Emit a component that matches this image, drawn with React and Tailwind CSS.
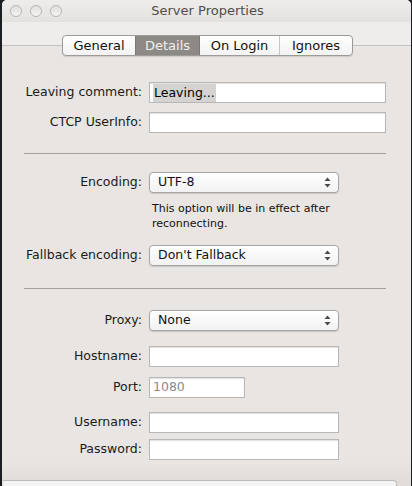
import React from "react";

const font = { fontFamily: '"DejaVu Sans", "Liberation Sans", sans-serif' };

function Arrows() {
  return (
    <svg width="7" height="11" viewBox="0 0 7 11" className="shrink-0">
      <path d="M3.5 0.5 L6.5 4 L0.5 4 Z" fill="#4a4a4a" />
      <path d="M3.5 10.5 L6.5 7 L0.5 7 Z" fill="#4a4a4a" />
    </svg>
  );
}

function Label({ children }) {
  return (
    <div className="w-[141px] shrink-0 text-right pr-[1px] text-[12.5px] text-[#1a1a1a] leading-none">
      {children}
    </div>
  );
}

function Field({ w, h = "h-[21px]", children }) {
  return (
    <div
      className={`${w} ${h} bg-white border border-[#b9b7b5] shadow-[inset_0_1px_1px_rgba(0,0,0,0.12)] flex items-center px-[3px] text-[12.5px]`}
    >
      {children}
    </div>
  );
}

function Popup({ value }) {
  return (
    <div className="w-[190px] h-[21px] rounded-[4px] border border-[#a8a6a4] bg-gradient-to-b from-white to-[#f2f2f2] shadow-[0_1px_1px_rgba(0,0,0,0.15)] flex items-center justify-between pl-[8px] pr-[7px] text-[12.5px] text-[#111]">
      <span>{value}</span>
      <Arrows />
    </div>
  );
}

function Row({ label, children, className = "" }) {
  return (
    <div className={`flex items-center gap-[6px] ${className}`}>
      <Label>{label}</Label>
      {children}
    </div>
  );
}

export default function App() {
  return (
    <div className="w-[412px] h-[486px] bg-[#1c1e22] overflow-hidden" style={font}>
      <div className="ml-[2px] w-[409px] h-[486px] bg-[#e8e5e2] rounded-t-[5px] flex flex-col relative">
        {/* Title bar */}
        <div className="h-[22px] rounded-t-[5px] bg-gradient-to-b from-[#efedeb] to-[#e4e2df] flex items-center relative">
          <div className="flex gap-[8px] pl-[8px]">
            {[0, 1, 2].map((i) => (
              <div
                key={i}
                className="w-[12px] h-[12px] rounded-full border border-[#b8b6b4] bg-gradient-to-b from-[#e2e0de] to-[#f4f3f2]"
              />
            ))}
          </div>
          <div className="absolute inset-0 flex items-center justify-center text-[13px] text-[#4f4d4b] pl-[2px]">
            Server Properties
          </div>
        </div>
        {/* toolbar band */}
        <div className="h-[24px] bg-[#efedeb] border-b border-[#c4c2bf]" />
        {/* segmented control */}
        <div className="-mt-[11px] flex justify-center pl-[2px] relative">
          <div className="flex h-[21px] rounded-[4px] border border-[#9d9b98] bg-gradient-to-b from-white to-[#f3f3f3] shadow-[0_1px_1px_rgba(0,0,0,0.12)] text-[13px] overflow-hidden">
            <div className="w-[72px] flex items-center justify-center text-[#111]">General</div>
            <div className="w-[65px] flex items-center justify-center bg-[#8d8a85] text-[#f1f0ee] border-x border-[#7d7a76]">
              Details
            </div>
            <div className="w-[80px] flex items-center justify-center text-[#111] border-r border-[#c9c7c5]">
              On Login
            </div>
            <div className="w-[72px] flex items-center justify-center text-[#111]">Ignores</div>
          </div>
        </div>

        {/* Form */}
        <Row label="Leaving comment:" className="mt-[26px]">
          <Field w="w-[237px]">
            <span className="bg-[#d5d3d1] px-[1px] leading-[18px]">Leaving...</span>
          </Field>
        </Row>
        <Row label="CTCP UserInfo:" className="mt-[9px]">
          <Field w="w-[237px]" />
        </Row>

        <div className="ml-[22px] w-[362px] h-px bg-[#a3a09d] mt-[20px]" />

        <Row label="Encoding:" className="mt-[18px]">
          <Popup value="UTF-8" />
        </Row>
        <div className="ml-[150px] mt-[8px] text-[11px] leading-[15px] text-[#111]">
          This option will be in effect after
          <br />
          reconnecting.
        </div>
        <Row label="Fallback encoding:" className="mt-[14px]">
          <Popup value="Don't Fallback" />
        </Row>

        <div className="ml-[22px] w-[362px] h-px bg-[#a3a09d] mt-[22px]" />

        <Row label="Proxy:" className="mt-[21px]">
          <Popup value="None" />
        </Row>
        <Row label="Hostname:" className="mt-[15px]">
          <Field w="w-[190px]" />
        </Row>
        <Row label="Port:" className="mt-[10px]">
          <Field w="w-[96px]" h="h-[21px]">
            <span className="text-[#8a8a8a]">1080</span>
          </Field>
        </Row>
        <Row label="Username:" className="mt-[14px]">
          <Field w="w-[190px]" />
        </Row>
        <Row label="Password:" className="mt-[6px]">
          <Field w="w-[190px]" />
        </Row>

        {/* bottom */}
        <div className="mt-auto h-[24px] bg-gradient-to-b from-[#e8e5e2] to-[#dedbd8] flex flex-col justify-end">
          <div className="h-[6px] w-[394px] ml-[1px] bg-[#f4f4f4] border-t border-r border-[#bdbbb9] rounded-tr-[4px]" />
        </div>
      </div>
    </div>
  );
}
